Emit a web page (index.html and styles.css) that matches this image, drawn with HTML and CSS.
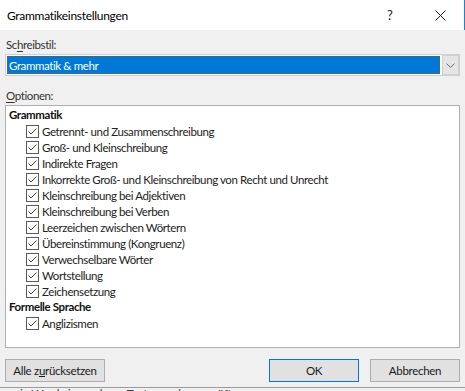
FILE: index.html
```html
<!DOCTYPE html>
<html lang="de">
<head>
    <meta charset="UTF-8">
    <meta name="viewport" content="width=device-width, initial-scale=1.0">
    <title>Grammatikeinstellungen</title>
    <link rel="stylesheet" href="styles.css">
</head>
<body>
    <div class="dialog">
        <div class="titlebar">
            <span class="title">Grammatikeinstellungen</span>
            <span class="help">?</span>
            <span class="close">
                <svg width="11" height="11" viewBox="0 0 11 11"><path d="M0.5 0.5 L10.5 10.5 M10.5 0.5 L0.5 10.5" stroke="#1a1a1a" stroke-width="1" fill="none"/></svg>
            </span>
        </div>

        <div class="content">
            <div class="label">Sc<u>h</u>reibstil:</div>
            <div class="combo">
                <div class="combo-value"><span>Grammatik &amp; mehr</span></div>
                <div class="combo-btn">
                    <svg width="9" height="5" viewBox="0 0 9 5"><path d="M0.5 0.5 L4.5 4.5 L8.5 0.5" stroke="#6d6d6d" stroke-width="1" fill="none"/></svg>
                </div>
            </div>

            <div class="label label-options"><u>O</u>ptionen:</div>
            <div class="list" id="optionList"></div>

            <div class="buttons">
                <button class="btn btn-reset">Alle z<u>u</u>rücksetzen</button>
                <span class="spacer"></span>
                <button class="btn btn-ok">OK</button>
                <button class="btn">Abbrechen</button>
            </div>
        </div>
        <div class="behind"><span>in Word eingegebene Texte werden geprüft</span></div>
    </div>

    <script>
        let gruppen = [
            { name: "Grammatik", items: [
                "Getrennt- und Zusammenschreibung",
                "Groß- und Kleinschreibung",
                "Indirekte Fragen",
                "Inkorrekte Groß- und Kleinschreibung von Recht und Unrecht",
                "Kleinschreibung bei Adjektiven",
                "Kleinschreibung bei Verben",
                "Leerzeichen zwischen Wörtern",
                "Übereinstimmung (Kongruenz)",
                "Verwechselbare Wörter",
                "Wortstellung",
                "Zeichensetzung"
            ]},
            { name: "Formelle Sprache", items: ["Anglizismen"] }
        ];

        let box = '<svg class="check" width="13" height="13" viewBox="0 0 13 13"><rect x="0.5" y="0.5" width="12" height="12" fill="#fff" stroke="#5a5a5a"/><path d="M2.5 6.5 L5 9 L10.5 3.5" stroke="#444" stroke-width="1" fill="none"/></svg>';

        function renderList() {
            let list = document.getElementById("optionList");
            list.innerHTML = "";
            gruppen.forEach(g => {
                list.innerHTML += `<div class="group">${g.name}</div>`;
                g.items.forEach(item => {
                    list.innerHTML += `<div class="row">${box}<span>${item}</span></div>`;
                });
            });
        }

        renderList();
    </script>
</body>
</html>
```

FILE: styles.css
```css
html, body { margin: 0; padding: 0; }
body { width: 465px; height: 391px; overflow: hidden; background: #f0f0f0; font-family: "Segoe UI", Lato, sans-serif; font-size: 11.5px; letter-spacing: -0.4px; color: #1a1a1a; }
.dialog { height: 391px; display: flex; flex-direction: column; }

.titlebar { height: 30px; flex: none; background: #fff; display: flex; align-items: center; border-right: 1px solid #1883d7; box-sizing: border-box; }
.title { font-size: 12px; padding-left: 7px; flex: 1; color: #000; letter-spacing: -0.3px; }
.help { font-size: 13px; width: 14px; margin-right: 34px; }
.close { width: 11px; height: 11px; margin-right: 18px; display: flex; }

.content { padding: 0 5px; display: flex; flex-direction: column; }
.label { height: 16px; line-height: 16px; margin-top: 7px; padding-left: 1px; color: #333; }
.label u { text-underline-offset: 2px; }
.label-options { margin-top: 12px; }

.combo { height: 22px; margin-top: 1px; background: #fff; border: 1px solid #cfcfcf; box-sizing: border-box; display: flex; padding: 1px; }
.combo-value { flex: 1; background: #0078d7; color: #fff; border: 1px dotted #7a5a3c; display: flex; align-items: center; margin-right: 2px; }
.combo-value span { padding-left: 1px; }
.combo-btn { width: 15px; background: #e5e5e5; border: 1px solid #d0d0d0; display: flex; align-items: center; justify-content: center; margin: -1px -1px -1px 0; }

.list { height: 243px; margin-top: 1px; background: #fff; border: 1px solid #a9b0b8; box-sizing: border-box; padding: 1px 0 0 3px; }
.group { height: 16px; line-height: 16px; font-weight: bold; color: #111; }
.row { height: 16px; display: flex; align-items: center; padding-left: 17px; color: #222; white-space: nowrap; }
.check { margin-right: 3px; flex: none; }

.buttons { display: flex; margin-top: 11px; gap: 11px; }
.spacer { flex: 1; }
.btn { height: 23px; width: 90px; background: #e1e1e1; border: 1px solid #adadad; font-family: inherit; font-size: 11.5px; letter-spacing: -0.3px; color: #1a1a1a; padding: 0; white-space: nowrap; }
.btn-reset { width: 100px; }
.btn-ok { border-color: #0078d7; }

.behind { height: 3px; margin-top: auto; border-top: 1px solid #9a9a9a; overflow: hidden; background: #f0f0f0; }
.behind span { display: block; margin-top: 0; padding-left: 20px; font-size: 12px; line-height: 12px; color: #444; white-space: nowrap; }
```
